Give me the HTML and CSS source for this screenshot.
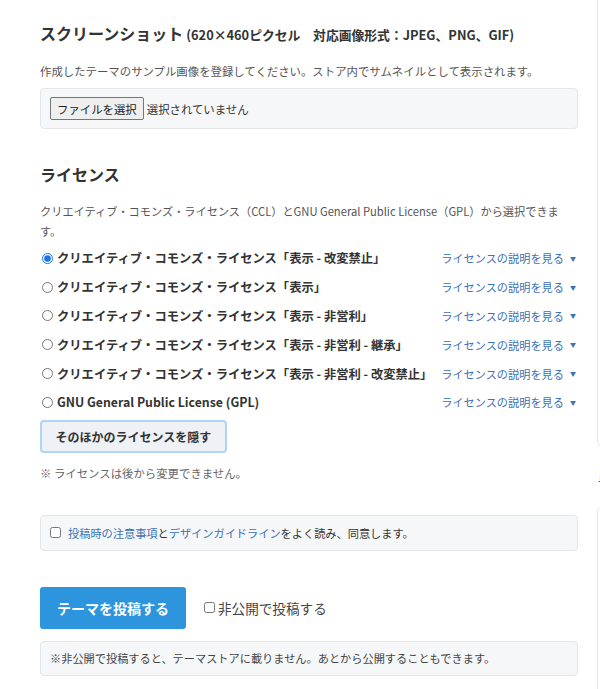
FILE: index.html
```html
<!DOCTYPE html>
<html lang="ja">
<head>
<meta charset="utf-8">
<title>テーマ投稿</title>
<link rel="stylesheet" href="styles.css">
</head>
<body>
<div class="page">
  <main class="main">
    <section class="section">
      <h2 class="heading">スクリーンショット<span class="heading-sub">(620×460ピクセル　対応画像形式：JPEG、PNG、GIF)</span></h2>
      <p class="desc">作成したテーマのサンプル画像を登録してください。ストア内でサムネイルとして表示されます。</p>
      <div class="box file-box">
        <span class="file-btn">ファイルを選択</span><span class="file-name">選択されていません</span>
      </div>
    </section>

    <section class="section license">
      <h2 class="heading">ライセンス</h2>
      <p class="desc license-desc">クリエイティブ・コモンズ・ライセンス（CCL）とGNU General Public License（GPL）から選択できます。</p>
      <ul class="license-list">
        <li class="license-row">
          <label class="radio-label"><input type="radio" name="lic" class="radio" checked>クリエイティブ・コモンズ・ライセンス「表示 - 改変禁止」</label>
          <a class="more" href="#">ライセンスの説明を見る<span class="caret">▼</span></a>
        </li>
        <li class="license-row">
          <label class="radio-label"><input type="radio" name="lic" class="radio">クリエイティブ・コモンズ・ライセンス「表示」</label>
          <a class="more" href="#">ライセンスの説明を見る<span class="caret">▼</span></a>
        </li>
        <li class="license-row">
          <label class="radio-label"><input type="radio" name="lic" class="radio">クリエイティブ・コモンズ・ライセンス「表示 - 非営利」</label>
          <a class="more" href="#">ライセンスの説明を見る<span class="caret">▼</span></a>
        </li>
        <li class="license-row">
          <label class="radio-label"><input type="radio" name="lic" class="radio">クリエイティブ・コモンズ・ライセンス「表示 - 非営利 - 継承」</label>
          <a class="more" href="#">ライセンスの説明を見る<span class="caret">▼</span></a>
        </li>
        <li class="license-row">
          <label class="radio-label"><input type="radio" name="lic" class="radio">クリエイティブ・コモンズ・ライセンス「表示 - 非営利 - 改変禁止」</label>
          <a class="more" href="#">ライセンスの説明を見る<span class="caret">▼</span></a>
        </li>
        <li class="license-row">
          <label class="radio-label"><input type="radio" name="lic" class="radio">GNU General Public License (GPL)</label>
          <a class="more" href="#">ライセンスの説明を見る<span class="caret">▼</span></a>
        </li>
      </ul>
      <button class="hide-btn" type="button">そのほかのライセンスを隠す</button>
      <p class="note">※ ライセンスは後から変更できません。</p>
    </section>

    <div class="box agree-box">
      <label class="agree-label"><input type="checkbox" class="check">
        <span><a class="link" href="#">投稿時の注意事項</a>と<a class="link" href="#">デザインガイドライン</a>をよく読み、同意します。</span>
      </label>
    </div>

    <div class="submit-row">
      <button class="submit-btn" type="button">テーマを投稿する</button>
      <label class="private-label"><input type="checkbox" class="check private-check">非公開で投稿する</label>
    </div>

    <div class="box notice-box">※非公開で投稿すると、テーマストアに載りません。あとから公開することもできます。</div>
  </main>

  <aside class="sidebar">
    <div class="side-panel side-top"></div>
    <div class="side-title">ランキング</div>
    <div class="side-panel side-bottom"></div>
  </aside>
</div>
</body>
</html>
```

FILE: styles.css
```css
html, body {
  margin: 0;
  padding: 0;
  overflow: hidden;
  background: #fff;
}

body {
  font-family: "Noto Sans CJK JP", "Noto Sans", sans-serif;
  color: #333;
}

.page {
  display: flex;
  gap: 19px;
  padding-left: 40px;
  width: 900px;
}

.main {
  width: 538px;
  flex: none;
}

.section {
  margin: 0;
}

.heading {
  margin: 21px 0 0;
  font-size: 16px;
  line-height: 24px;
  font-weight: 700;
  color: #333;
  white-space: nowrap;
}

.heading-sub {
  font-size: 12.8px;
  margin-left: 3px;
}

.desc {
  margin: 14px 0 0;
  font-size: 11.4px;
  line-height: 20px;
  color: #555;
}

.box {
  background: #f6f7f9;
  border: 1px solid #e4e6e9;
  border-radius: 4px;
}

.file-box {
  margin-top: 7px;
  padding: 8px 9px;
  display: flex;
  align-items: center;
}

.file-btn {
  display: inline-flex;
  align-items: center;
  height: 21px;
  padding: 0 6px;
  border: 1px solid #767676;
  border-radius: 2px;
  background: #efefef;
  font-size: 11.4px;
  color: #222;
}

.file-name {
  margin-left: 3px;
  font-size: 11.4px;
  color: #333;
}

.license .heading {
  margin-top: 33px;
}

.license-desc {
  margin-top: 16px;
  line-height: 19.5px;
  font-size: 11.2px;
}

.license-list {
  list-style: none;
  margin: 3px 0 0;
  padding: 0;
}

.license-row {
  height: 28.8px;
  display: flex;
  align-items: center;
  justify-content: space-between;
}

.radio-label {
  display: flex;
  align-items: center;
  font-size: 12.3px;
  font-weight: 700;
  color: #333;
}

.radio {
  width: 11px;
  height: 11px;
  margin: 0 4px 0 2px;
  accent-color: #1a73e8;
}

.more {
  color: #3a72b8;
  text-decoration: none;
  font-size: 11.2px;
  margin-right: 2px;
  display: flex;
  align-items: center;
}

.caret {
  font-size: 6px;
  margin-left: 6px;
  color: #3a72b8;
}

.hide-btn {
  display: block;
  margin-top: 3px;
  width: 187px;
  height: 33px;
  border: 2px solid #b0d5f4;
  border-radius: 4px;
  background: #eef1f5;
  font-family: inherit;
  font-size: 12px;
  font-weight: 700;
  color: #333;
  padding: 0;
}

.note {
  margin: 11px 0 0;
  font-size: 11.4px;
  line-height: 18px;
  color: #666;
}

.agree-box {
  margin-top: 33px;
  height: 34px;
  padding: 0 9px;
  display: flex;
  align-items: center;
}

.agree-label {
  display: flex;
  align-items: center;
  font-size: 11.2px;
  color: #333;
}

.check {
  width: 11px;
  height: 11px;
  margin: 0 7px 0 0;
}

.link {
  color: #3a72b8;
  text-decoration: none;
}

.submit-row {
  margin-top: 36px;
  display: flex;
  align-items: center;
}

.submit-btn {
  width: 146px;
  height: 42px;
  border: none;
  border-radius: 3px;
  background: #2c95dd;
  color: #fff;
  font-family: inherit;
  font-size: 14px;
  font-weight: 700;
  padding: 0;
}

.private-label {
  margin-left: 18px;
  display: flex;
  align-items: center;
  font-size: 13.6px;
  color: #444;
}

.private-check {
  margin-right: 3px;
}

.notice-box {
  margin-top: 12px;
  height: 33px;
  padding: 0 9px;
  display: flex;
  align-items: center;
  font-size: 11.2px;
  color: #444;
}

.sidebar {
  width: 250px;
  flex: none;
}

.side-panel {
  border: 1px solid #e4e6e9;
}

.side-top {
  height: 446px;
  border-top: none;
  border-radius: 0 0 6px 6px;
}

.side-title {
  margin-top: 27px;
  font-size: 12px;
  line-height: 18px;
  color: #555;
}

.side-bottom {
  margin-top: 14px;
  height: 300px;
  border-radius: 6px;
}
```
